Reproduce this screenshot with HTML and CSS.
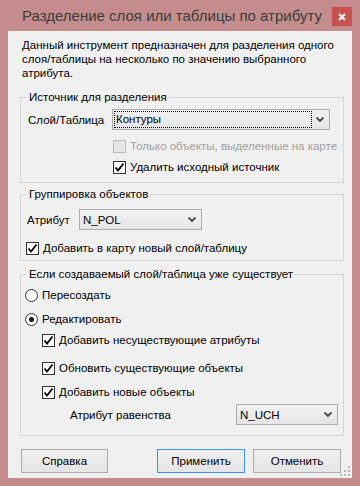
FILE: index.html
```html
<!DOCTYPE html>
<html lang="ru">
<head>
<meta charset="utf-8">
<title>Разделение слоя или таблицы по атрибуту</title>
<link rel="stylesheet" href="styles.css">
</head>
<body>
<div class="window">
  <div class="titlebar">
    <div class="title">Разделение слоя или таблицы по атрибуту</div>
    <div class="close"><svg width="8" height="8" viewBox="0 0 8 8"><path d="M1 1 L7 7 M7 1 L1 7" stroke="#fff" stroke-width="2"/></svg></div>
  </div>
  <div class="client">
    <div class="desc">Данный инструмент предназначен для разделения одного слоя/таблицы на несколько по значению выбранного атрибута.</div>

    <div class="group g1">
      <div class="gtitle">Источник для разделения</div>
      <div class="row combo-row r-src">
        <span class="label l-src">Слой/Таблица</span>
        <div class="combo c-src"><span class="ctext focus">Контуры</span><span class="arrow"><svg width="8" height="5" viewBox="0 0 8 5"><path d="M0.5 0.5 L4 4 L7.5 0.5" fill="none" stroke="#444" stroke-width="1.8"/></svg></span></div>
      </div>
      <div class="row check-row r-only disabled">
        <span class="box box-dis"></span><span class="ctl">Только объекты, выделенные на карте</span>
      </div>
      <div class="row check-row r-del">
        <span class="box"><svg width="11" height="11" viewBox="0 0 11 11"><path d="M1.5 5.5 L4 8.5 L9.5 1.5" fill="none" stroke="#000" stroke-width="1.9"/></svg></span><span class="ctl">Удалить исходный источник</span>
      </div>
    </div>

    <div class="group g2">
      <div class="gtitle">Группировка объектов</div>
      <div class="row combo-row r-attr">
        <span class="label l-attr">Атрибут</span>
        <div class="combo c-attr"><span class="ctext">N_POL</span><span class="arrow"><svg width="8" height="5" viewBox="0 0 8 5"><path d="M0.5 0.5 L4 4 L7.5 0.5" fill="none" stroke="#444" stroke-width="1.8"/></svg></span></div>
      </div>
      <div class="row check-row r-add">
        <span class="box"><svg width="11" height="11" viewBox="0 0 11 11"><path d="M1.5 5.5 L4 8.5 L9.5 1.5" fill="none" stroke="#000" stroke-width="1.9"/></svg></span><span class="ctl">Добавить в карту новый слой/таблицу</span>
      </div>
    </div>

    <div class="group g3">
      <div class="gtitle">Если создаваемый слой/таблица уже существует</div>
      <div class="row check-row r-rad1">
        <span class="radio"></span><span class="ctl">Пересоздать</span>
      </div>
      <div class="row check-row r-rad2">
        <span class="radio on"><span class="dot"></span></span><span class="ctl">Редактировать</span>
      </div>
      <div class="row check-row r-c1">
        <span class="box"><svg width="11" height="11" viewBox="0 0 11 11"><path d="M1.5 5.5 L4 8.5 L9.5 1.5" fill="none" stroke="#000" stroke-width="1.9"/></svg></span><span class="ctl">Добавить несуществующие атрибуты</span>
      </div>
      <div class="row check-row r-c2">
        <span class="box"><svg width="11" height="11" viewBox="0 0 11 11"><path d="M1.5 5.5 L4 8.5 L9.5 1.5" fill="none" stroke="#000" stroke-width="1.9"/></svg></span><span class="ctl">Обновить существующие объекты</span>
      </div>
      <div class="row check-row r-c3">
        <span class="box"><svg width="11" height="11" viewBox="0 0 11 11"><path d="M1.5 5.5 L4 8.5 L9.5 1.5" fill="none" stroke="#000" stroke-width="1.9"/></svg></span><span class="ctl">Добавить новые объекты</span>
      </div>
      <div class="row combo-row r-eq">
        <span class="label l-eq">Атрибут равенства</span>
        <div class="combo c-eq"><span class="ctext">N_UCH</span><span class="arrow"><svg width="8" height="5" viewBox="0 0 8 5"><path d="M0.5 0.5 L4 4 L7.5 0.5" fill="none" stroke="#444" stroke-width="1.8"/></svg></span></div>
      </div>
    </div>

    <div class="buttons">
      <button class="btn b-help">Справка</button>
      <span class="spacer"></span>
      <button class="btn default">Применить</button>
      <button class="btn b-cancel">Отменить</button>
    </div>

    <svg class="grip" width="10" height="10" viewBox="0 0 10 10" fill="#b9b9b9"><rect x="8" y="0" width="2" height="2"/><rect x="4" y="4" width="2" height="2"/><rect x="8" y="4" width="2" height="2"/><rect x="0" y="8" width="2" height="2"/><rect x="4" y="8" width="2" height="2"/><rect x="8" y="8" width="2" height="2"/></svg>
  </div>
</div>
</body>
</html>
```

FILE: styles.css
```css
* { box-sizing: border-box; }
html, body { margin: 0; padding: 0; }
body {
  width: 360px;
  height: 486px;
  background: #c48c8c;
  font-family: "Segoe UI", "Liberation Sans", Arial, sans-serif;
  font-size: 11.5px;
  color: #000;
  overflow: hidden;
}
.window { display: flex; flex-direction: column; height: 486px; }
.titlebar { height: 31px; display: flex; align-items: flex-start; flex: none; }
.title {
  flex: 1;
  padding: 6px 0 0 22px;
  font-size: 15px;
  line-height: 20px;
  color: #3c3c3c;
  white-space: nowrap;
}
.close {
  width: 20px;
  height: 19px;
  margin: 7px 8px 0 0;
  background: #c75050;
  display: flex;
  align-items: center;
  justify-content: center;
}
.client {
  flex: 1;
  margin: 0 8px 8px;
  background: #f0f0f0;
  padding: 7px 8px 0 12px;
  position: relative;
}
.desc { padding-left: 2px; line-height: 14px; height: 42px; }

.group { border: 1px solid #d5d5d5; }
.g1 { margin-top: 17px; padding: 0 0 8px 7px; }
.g2 { margin-top: 11px; padding: 0 0 5px 6px; }
.g3 { margin-top: 13px; padding: 0 0 10px 4px; }
.gtitle {
  display: table;
  margin-top: -8px;
  padding: 0 2px;
  line-height: 14px;
  background: #f0f0f0;
}
.g1 .gtitle { margin-left: -1px; }
.g2 .gtitle { margin-left: 0; }
.g3 .gtitle { margin-left: 2px; }

.row { display: flex; align-items: center; }
.combo-row { height: 21px; }
.check-row { height: 13px; line-height: 13px; }
.label { flex: none; }
.ctl { margin-left: 4px; white-space: nowrap; }

.combo {
  height: 21px;
  border: 1px solid #acacac;
  background: linear-gradient(#f2f2f2, #e5e5e5);
  display: flex;
  align-items: center;
}
.ctext { flex: 1; padding-left: 3px; line-height: 14px; }
.ctext.focus { margin: 0 0 0 2px; padding-left: 1px; outline: 1px dotted #000; height: 15px; }
.arrow { width: 19px; flex: none; display: flex; justify-content: center; align-items: center; }
.c-src .arrow { width: 18px; }

.box, .radio {
  width: 13px;
  height: 13px;
  flex: none;
  border: 1px solid #333;
  background: #fff;
  display: flex;
  align-items: center;
  justify-content: center;
}
.box-dis { border-color: #bcbcbc; background: #e6e6e6; }
.disabled .ctl { color: #a0a0a0; }
.radio { border-radius: 50%; }
.dot { width: 5px; height: 5px; border-radius: 50%; background: #1a1a1a; }

/* group 1 */
.r-src { margin-top: 5px; }
.l-src { width: 84px; }
.c-src { width: 218px; }
.r-only { margin-top: 10px; padding-left: 85px; }
.r-del { margin-top: 8px; padding-left: 85px; }

/* group 2 */
.r-attr { margin-top: 8px; }
.l-attr { width: 52px; }
.c-attr { width: 123px; }
.r-add { margin-top: 12px; margin-left: -1px; }

/* group 3 */
.r-rad1 { margin-top: 8px; }
.r-rad2 { margin-top: 11px; }
.r-c1 { margin-top: 8px; padding-left: 17px; }
.r-c2 { margin-top: 15px; padding-left: 17px; }
.r-c3 { margin-top: 11px; padding-left: 17px; }
.r-eq { margin-top: 5px; padding-left: 45px; }
.l-eq { width: 166px; }
.c-eq { width: 102px; }

.buttons {
  display: flex;
  margin-top: 13px;
  padding: 0 3px 0 1px;
  gap: 0;
}
.spacer { flex: 1; }
.btn {
  width: 88px;
  height: 24px;
  border: 1px solid #acacac;
  background: linear-gradient(#f0f0f0, #e5e5e5);
  font-family: inherit;
  font-size: 11.5px;
  color: #000;
  padding: 0;
  margin: 0;
}
.btn.default { border-color: #3399ff; margin-right: 8px; }
.b-help { width: 87px; }
.grip { position: absolute; right: 2px; bottom: 2px; }
```
